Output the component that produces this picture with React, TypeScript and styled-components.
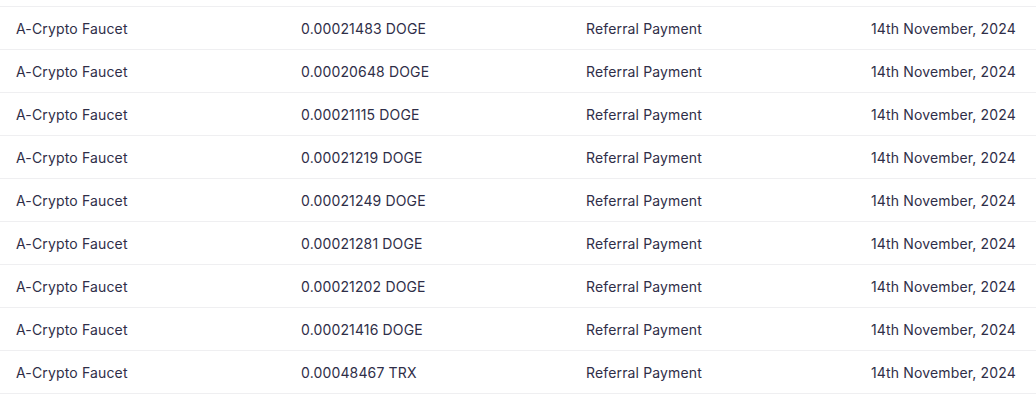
import styled, { createGlobalStyle } from "styled-components";

const GlobalStyle = createGlobalStyle`
  body {
    margin: 0;
    background: #ffffff;
    font-family: "Inter", "Liberation Sans", sans-serif;
  }
`;

const Table = styled.div`
  padding-top: 6px;
  width: 1036px;
`;

const Row = styled.div`
  display: grid;
  grid-template-columns: 285px 285px 285px 1fr;
  align-items: center;
  height: 42px;
  padding-left: 16px;
  border-top: 1px solid #efeff1;

  &:last-child {
    border-bottom: 1px solid #efeff1;
  }
`;

const Cell = styled.div`
  font-size: 14px;
  letter-spacing: 0.15px;
  color: #2f2e48;
  white-space: nowrap;
  padding-top: 1px;
`;

interface Payment {
  amount: string;
}

const payments: Payment[] = [
  { amount: "0.00021483 DOGE" },
  { amount: "0.00020648 DOGE" },
  { amount: "0.00021115 DOGE" },
  { amount: "0.00021219 DOGE" },
  { amount: "0.00021249 DOGE" },
  { amount: "0.00021281 DOGE" },
  { amount: "0.00021202 DOGE" },
  { amount: "0.00021416 DOGE" },
  { amount: "0.00048467 TRX" },
];

function App() {
  return (
    <>
      <GlobalStyle />
      <Table>
        {payments.map((payment, index) => (
          <Row key={`payment_${index}`}>
            <Cell>A-Crypto Faucet</Cell>
            <Cell>{payment.amount}</Cell>
            <Cell>Referral Payment</Cell>
            <Cell>14th November, 2024</Cell>
          </Row>
        ))}
      </Table>
    </>
  );
}

export default App;
